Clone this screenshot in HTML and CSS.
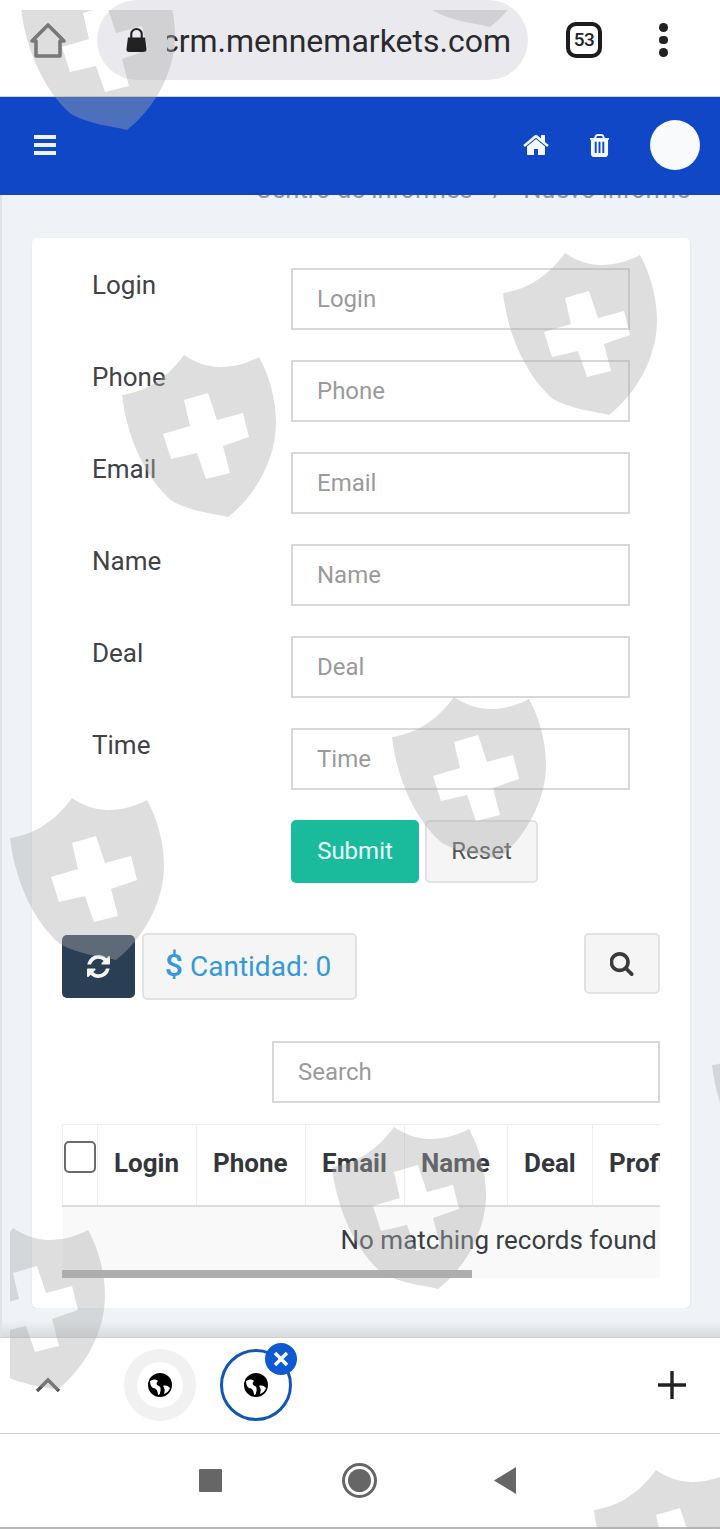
FILE: index.html
```html
<!DOCTYPE html>
<html lang="en">
<head>
<meta charset="utf-8">
<title>crm.mennemarkets.com</title>
<link rel="stylesheet" href="styles.css">
</head>
<body>
<div class="screen">
  <header class="chrome">
    <svg class="chrome-home" viewBox="0 0 40 40"><path d="M20 4 L36 20 H32 V35 H8 V20 H4 Z" fill="none" stroke="#555" stroke-width="3.6" stroke-linejoin="round"/></svg>
    <div class="pill">
      <svg class="lock" viewBox="0 0 22 26"><path d="M5.5 13V7.5a5.5 5.5 0 0 1 11 0V13" fill="none" stroke="#222" stroke-width="2.2"/><path d="M2 11 H20 L21.5 23 Q21.7 26 19 26 H3 Q.3 26 .5 23 Z" fill="#222"/></svg>
      <div class="url-clip"><span class="url">crm.mennemarkets.com</span></div>
    </div>
    <div class="tabcount">53</div>
    <div class="dots"><i></i><i></i><i></i></div>
  </header>

  <nav class="appbar">
    <div class="burger"><i></i><i></i><i></i></div>
    <div class="appbar-right">
      <svg class="ico-home" viewBox="0 0 1792 1792"><path d="M1472 992v480q0 26-19 45t-45 19h-384v-384h-256v384h-384q-26 0-45-19t-19-45v-480q0-1 .5-3t.5-3l575-474 575 474q1 2 1 6zm223-69l-62 74q-8 9-21 11h-3q-13 0-21-7l-692-577-692 577q-12 8-24 7-13-2-21-11l-62-74q-8-10-7-23.5t11-21.5l719-599q32-26 76-26t76 26l244 204v-195q0-14 9-23t23-9h192q14 0 23 9t9 23v408l219 182q10 8 11 21.5t-7 23.5z"/></svg>
      <svg class="ico-trash" viewBox="256 128 1280 1536"><path d="M704 1376v-704q0-14-9-23t-23-9h-64q-14 0-23 9t-9 23v704q0 14 9 23t23 9h64q14 0 23-9t9-23zm256 0v-704q0-14-9-23t-23-9h-64q-14 0-23 9t-9 23v704q0 14 9 23t23 9h64q14 0 23-9t9-23zm256 0v-704q0-14-9-23t-23-9h-64q-14 0-23 9t-9 23v704q0 14 9 23t23 9h64q14 0 23-9t9-23zm-544-992h448l-48-117q-7-9-17-11h-317q-10 2-17 11zm928 32v64q0 14-9 23t-23 9h-96v948q0 83-47 143.5t-113 60.5h-832q-66 0-113-58.5t-47-141.5v-952h-96q-14 0-23-9t-9-23v-64q0-14 9-23t23-9h309l70-167q15-37 54-63t79-26h320q40 0 79 26t54 63l70 167h309q14 0 23 9t9 23z"/></svg>
      <div class="avatar"></div>
    </div>
  </nav>

  <main class="content">
    <div class="crumbs"><span>Centro de informes</span><span class="sep">/</span><span>Nuevo informe</span></div>
    <section class="card">
      <form class="filter">
        <div class="row"><label>Login</label><div class="input">Login</div></div>
        <div class="row"><label>Phone</label><div class="input">Phone</div></div>
        <div class="row"><label>Email</label><div class="input">Email</div></div>
        <div class="row"><label>Name</label><div class="input">Name</div></div>
        <div class="row"><label>Deal</label><div class="input">Deal</div></div>
        <div class="row"><label>Time</label><div class="input">Time</div></div>
        <div class="actions"><div class="btn btn-submit">Submit</div><div class="btn btn-reset">Reset</div></div>
      </form>

      <div class="toolbar">
        <div class="btn-refresh"><svg viewBox="128 128 1536 1536"><path d="M1639 1056q0 5-1 7-64 268-268 434.5t-478 166.5q-146 0-282.5-55t-243.5-157l-129 129q-19 19-45 19t-45-19-19-45v-448q0-26 19-45t45-19h448q26 0 45 19t19 45-19 45l-137 137q71 66 161 102t187 36q134 0 250-65t186-179q11-17 53-117 8-23 30-23h192q13 0 22.5 9.5t9.5 22.5zm25-800v448q0 26-19 45t-45 19h-448q-26 0-45-19t-19-45 19-45l138-138q-148-137-349-137-134 0-250 65t-186 179q-11 17-53 117-8 23-30 23h-199q-13 0-22.5-9.5t-9.5-22.5v-7q65-268 270-434.5t480-166.5q146 0 284 55.5t245 156.5l130-129q19-19 45-19t45 19 19 45z"/></svg></div>
        <div class="btn-amount"><b>$</b> Cantidad: 0</div>
        <div class="btn-search"><svg viewBox="128 128 1600 1664"><path d="M1216 832q0-185-131.5-316.5t-316.5-131.5-316.5 131.5-131.5 316.5 131.5 316.5 316.5 131.5 316.5-131.5 131.5-316.5zm512 832q0 52-38 90t-90 38q-54 0-90-38l-343-342q-179 124-399 124-143 0-273.5-55.5t-225-150-150-225-55.5-273.5 55.5-273.5 150-225 225-150 273.5-55.5 273.5 55.5 225 150 150 225 55.5 273.5q0 220-124 399l343 343q37 37 37 90z"/></svg></div>
      </div>

      <div class="search-row"><div class="input input-search">Search</div></div>

      <div class="table-wrap">
        <table class="grid">
          <colgroup><col class="c0"><col class="c1"><col class="c2"><col class="c3"><col class="c4"><col class="c5"><col class="c6"></colgroup>
          <thead><tr><th class="check"><span class="checkbox"></span></th><th>Login</th><th>Phone</th><th>Email</th><th>Name</th><th>Deal</th><th class="last">Profit</th></tr></thead>
          <tbody><tr><td colspan="7">No matching records found</td></tr></tbody>
        </table>
        <div class="scrollbar"></div>
      </div>
    </section>
    <div class="fade"></div>
  </main>

  <div class="tabstrip">
    <svg class="chev" viewBox="0 0 26 16"><path d="M2 14 L13 3 L24 14" fill="none" stroke="#555" stroke-width="3.4"/></svg>
    <div class="tab tab-idle"><span class="tab-inner"><svg class="globe" viewBox="0 0 24 24"><circle cx="12" cy="12" r="12"/><path d="M2 8 C5 6 8 6 10 8 C8 10 8 12 11 13 C13 14 13 17 12 20 C12 21 11 22 10 22 C10 18 8 15 5 15 C3 14 2 11 2 8 Z M15 13 C18 12 20 13 22 15 C21 18 19 20 16 21 C17 18 17 15 15 13 Z" fill="#fff"/></svg></span></div>
    <div class="tab tab-active">
      <svg class="globe" viewBox="0 0 24 24"><circle cx="12" cy="12" r="12"/><path d="M2 8 C5 6 8 6 10 8 C8 10 8 12 11 13 C13 14 13 17 12 20 C12 21 11 22 10 22 C10 18 8 15 5 15 C3 14 2 11 2 8 Z M15 13 C18 12 20 13 22 15 C21 18 19 20 16 21 C17 18 17 15 15 13 Z" fill="#fff"/></svg>
      <span class="tab-close"><svg viewBox="0 0 16 16"><path d="M2 2 L14 14 M14 2 L2 14" stroke="#fff" stroke-width="3.4"/></svg></span>
    </div>
    <svg class="plus" viewBox="0 0 30 30"><path d="M15 1 V29 M1 15 H29" stroke="#222" stroke-width="3.4"/></svg>
  </div>

  <div class="navbar">
    <div class="nav-square"></div>
    <div class="nav-circle"><i></i></div>
    <svg class="nav-back" viewBox="0 0 24 28"><path d="M24 0 V28 L1 14 Z" fill="#666"/></svg>
  </div>

  <svg class="marks" viewBox="0 0 720 1529" aria-hidden="true">
    <defs>
      <path id="shield" fill-rule="evenodd" d="M62 0 C72 7 85 12 98 12 C112 12 126 8 137 2 C147 20 154 44 154 68 C154 105 132 142 106 162 C90 158 70 157 50 146 C20 120 4 76 0 40 C26 36 46 22 62 0 Z M62 45 L86 38 L95 65 L121 58 L127 82 L101 91 L108 118 L84 124 L75 98 L49 104 L41 79 L68 71 Z"/>
      <clipPath id="tile"><rect x="10" y="10" width="710" height="1519"/></clipPath>
    </defs>
    <g class="mark-fill" clip-path="url(#tile)">
      <use href="#shield" x="21" y="-32"/>
      <use href="#shield" x="384" y="-135"/>
      <use href="#shield" x="503" y="253"/>
      <use href="#shield" x="122" y="355"/>
      <use href="#shield" x="392" y="697"/>
      <use href="#shield" x="10" y="798"/>
      <use href="#shield" x="712" y="1025"/>
      <use href="#shield" x="332" y="1127"/>
      <use href="#shield" x="-49" y="1228"/>
      <use href="#shield" x="594" y="1470"/>
    </g>
  </svg>
</div>
</body>
</html>
```

FILE: styles.css
```css
* { box-sizing: border-box; }
html, body { margin: 0; padding: 0; }
body { width: 720px; height: 1529px; overflow: hidden; font-family: Roboto, "Liberation Sans", sans-serif; }
.screen { position: relative; width: 720px; height: 1529px; display: flex; flex-direction: column; background: #fff; overflow: hidden; }

/* browser chrome */
.chrome { height: 97px; flex: none; display: flex; align-items: flex-start; background: #fff; border-bottom: 1px solid #bcd7f0; }
.chrome-home { width: 40px; height: 40px; margin: 21px 0 0 28px; flex: none; }
.pill { width: 431px; height: 80px; margin: 0 0 0 29px; padding: 0 0 0 29px; border-radius: 40px; background: #e9e9ee; display: flex; align-items: flex-start; flex: none; }
.lock { width: 21px; height: 25px; margin: 27px 0 0 0; flex: none; }
.url-clip { width: 344px; margin: 19px 0 0 20px; overflow: hidden; white-space: nowrap; direction: rtl; flex: none; }
.url { font-size: 32px; line-height: 44px; color: #2a2a2e; direction: ltr; unicode-bidi: isolate; }
.tabcount { width: 36px; height: 36px; margin: 22px 0 0 38px; border: 4px solid #1c1c1c; border-radius: 10px; font-size: 19px; font-weight: 500; letter-spacing: -.5px; text-align: center; line-height: 28px; color: #222; flex: none; }
.dots { margin: 23px 0 0 57px; display: flex; flex-direction: column; gap: 4px; flex: none; }
.dots i { width: 8.5px; height: 8.5px; border-radius: 50%; background: #222; display: block; }

/* app bar */
.appbar { height: 98px; flex: none; background: #0f47c7; border-top: 1px solid #1a45a8; border-bottom: 1px solid #1a45a8; display: flex; align-items: center; justify-content: space-between; padding: 0 20px 2px 34px; }
.burger { display: flex; flex-direction: column; gap: 4px; }
.burger i { display: block; width: 22px; height: 4px; background: #eef4ff; }
.appbar-right { display: flex; align-items: center; }
.ico-home { width: 28px; height: 28px; fill: #f4f8ff; }
.ico-trash { width: 19px; height: 23px; fill: #f4f8ff; margin-left: 40px; }
.avatar { width: 50px; height: 50px; border-radius: 50%; background: #f9fafb; margin-left: 41px; }

/* content */
.content { flex: 1; min-height: 0; background: #eff3f7; border-left: 2px solid #dfe3e8; display: flex; flex-direction: column; position: relative; }
.crumbs { height: 3px; flex: none; overflow: hidden; display: flex; align-items: flex-end; justify-content: flex-end; gap: 20px; padding-right: 30px; font-size: 25.5px; line-height: 18px; color: #8d95a5; white-space: nowrap; }
.card { flex: none; height: 1070px; margin: 40px 30px 0 30px; background: #fff; border-radius: 5px; box-shadow: 0 1px 2px rgba(0,0,0,.08); }
.fade { flex: 1; background: linear-gradient(#eff3f7 0, #eff3f7 40%, #d9dbdd 100%); }

.filter { padding: 30px 0 0 60px; }
.row { display: flex; height: 62px; margin-bottom: 30px; }
.row label { width: 199px; font-size: 26px; line-height: 34px; color: #3f4347; flex: none; }
.input { width: 339px; height: 62px; border: 2px solid #d8d8d8; padding-left: 24px; font-size: 24px; line-height: 58px; color: #9a9a9a; background: #fff; }
.actions { display: flex; margin-left: 199px; gap: 6px; }
.btn { height: 63px; border-radius: 5px; font-size: 24px; line-height: 62px; text-align: center; }
.btn-submit { width: 128px; background: #1abb9c; color: #eafff9; }
.btn-reset { width: 113px; background: #f5f5f5; border: 2px solid #e2e2e2; color: #555; line-height: 58px; }

.toolbar { display: flex; align-items: flex-start; margin: 50px 30px 0 30px; }
.btn-refresh { width: 73px; height: 63px; margin-top: 2px; background: #2a3f54; border-radius: 5px; display: flex; align-items: center; justify-content: center; }
.btn-refresh svg { width: 23px; height: 23px; fill: #f5f5f5; }
.btn-amount { width: 215px; height: 67px; margin-left: 7px; padding-right: 3px; background: #f5f5f5; border: 2px solid #e2e2e2; border-radius: 5px; color: #3498db; font-size: 28px; line-height: 61px; text-align: center; white-space: nowrap; }
.btn-amount b { font-size: 32px; font-weight: 500; }
.btn-search { width: 76px; height: 61px; margin-left: auto; background: #f5f5f5; border: 2px solid #e2e2e2; border-radius: 5px; display: flex; align-items: center; justify-content: center; }
.btn-search svg { width: 24px; height: 24px; fill: #3a3a3a; }

.search-row { display: flex; justify-content: flex-end; margin: 41px 30px 0 0; }
.input-search { width: 388px; }

.table-wrap { position: relative; margin: 21px 30px 0 30px; height: 154px; overflow: hidden; }
.grid { border-collapse: collapse; table-layout: fixed; width: 640px; color: #33373b; }
.c0 { width: 35px; } .c1 { width: 99px; } .c2 { width: 109px; } .c3 { width: 99px; } .c4 { width: 103px; } .c5 { width: 85px; } .c6 { width: 110px; }
.grid th { height: 81px; border: 1px solid #eeeeee; border-bottom: 2px solid #dedede; font-size: 26px; font-weight: 700; text-align: left; padding: 0 0 3px 16px; white-space: nowrap; }
.grid th.check { padding: 0 0 0 1px; vertical-align: top; }
.checkbox { display: block; width: 32px; height: 32px; margin-top: 16px; border: 2px solid #6b6b6b; border-radius: 5px; background: #fff; }
.grid td { height: 73px; background: #f9f9f9; font-size: 26px; text-align: left; padding: 0 0 5px 278px; color: #3a3e42; white-space: nowrap; }
.scrollbar { position: absolute; left: 0; bottom: 0; width: 410px; height: 8px; background: rgba(0,0,0,.3); }

/* tab strip */
.tabstrip { height: 97px; flex: none; background: #fff; border-top: 1px solid #cfcfcf; border-bottom: 1px solid #cfcfcf; display: flex; align-items: center; padding-bottom: 2px; position: relative; }
.chev { width: 26px; height: 16px; margin: 0 0 0 35px; flex: none; }
.tab { width: 72px; height: 72px; border-radius: 50%; display: flex; align-items: center; justify-content: center; flex: none; }
.tab-idle { background: #f1f1f1; margin-left: 63px; }
.tab-inner { width: 46px; height: 46px; border-radius: 50%; background: #fff; display: flex; align-items: center; justify-content: center; }
.tab-active { border: 3.5px solid #1255b8; margin-left: 24px; position: relative; }
.globe { width: 24px; height: 24px; display: block; }
.tab-close { position: absolute; right: -8px; top: -9px; width: 32px; height: 32px; border-radius: 50%; background: #0f5ad0; display: flex; align-items: center; justify-content: center; }
.tab-close svg { width: 16px; height: 16px; }
.plus { width: 30px; height: 30px; margin-left: auto; margin-right: 33px; flex: none; }

/* system nav */
.navbar { height: 95px; flex: none; background: #fff; border-bottom: 2px solid #b8b8b8; display: flex; align-items: center; position: relative; }
.nav-square { width: 23px; height: 23px; margin-left: 199px; background: #666; border-radius: 1px; flex: none; }
.nav-circle { width: 35px; height: 35px; margin-left: 120px; border: 3px solid #666; border-radius: 50%; padding: 3px; flex: none; }
.nav-circle i { display: block; width: 100%; height: 100%; border-radius: 50%; background: #666; }
.nav-back { width: 23px; height: 27px; margin-left: 116px; flex: none; }

/* watermark layer */
.marks { position: absolute; left: 0; top: 0; width: 720px; height: 1529px; pointer-events: none; }
.mark-fill { fill: rgba(172,172,172,.4); }
```
